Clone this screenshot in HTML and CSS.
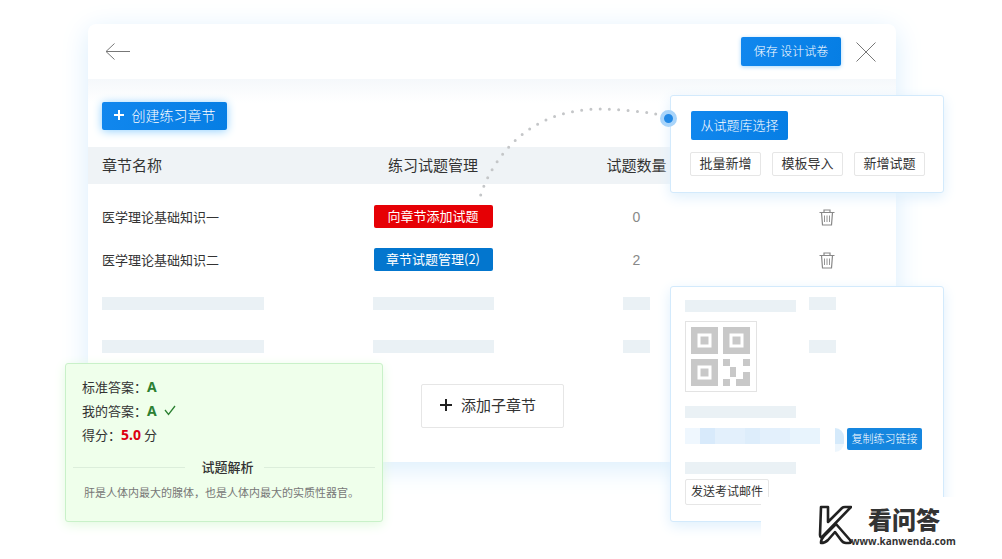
FILE: index.html
```html
<!DOCTYPE html>
<html lang="zh-CN">
<head>
<meta charset="utf-8">
<title>练习章节</title>
<link rel="stylesheet" href="styles.css">
</head>
<body>
<div class="stage">
  <main class="panel">
    <header class="panel-head">
      <button class="icon-btn" type="button" aria-label="返回">
        <svg width="26" height="18" viewBox="0 0 26 18"><path d="M9.500 .5L1 8.500l8.500 8M1 8.500h24" fill="none" stroke="#777" stroke-width="1"/></svg>
      </button>
      <div class="head-actions">
        <button class="btn primary save" type="button">保存 设计试卷</button>
        <button class="icon-btn" type="button" aria-label="关闭">
          <svg width="20" height="20" viewBox="0 0 20 20"><path d="M.5.5l19 19M19.500.5l-19 19" fill="none" stroke="#777" stroke-width="1"/></svg>
        </button>
      </div>
    </header>
    <div class="toolbar">
      <button class="btn primary create" type="button"><svg width="10" height="10" viewBox="0 0 10 10"><path d="M5 0v10M0 5h10" stroke="#fff" stroke-width="2"/></svg>创建练习章节</button>
    </div>
    <table class="chapters">
      <colgroup><col><col class="col-manage"><col class="col-count"><col class="col-del"></colgroup>
      <thead><tr><th>章节名称</th><th>练习试题管理</th><th>试题数量</th><th></th></tr></thead>
      <tbody>
        <tr><td>医学理论基础知识一</td><td><button class="btn tag red" type="button">向章节添加试题</button></td><td class="num">0</td>
          <td><button class="icon-btn" type="button" aria-label="删除"><svg width="16" height="17" viewBox="0 0 16 17"><g fill="none" stroke="#888"><path d="M.5 3.500h15M5 3.500V1h6v2.500M2.500 3.500l1 12.500h9l1-12.500" stroke-width="1.200"/><path d="M5.500 6.500v6.500M8 6.500v6.500M10.500 6.500v6.500" stroke-width=".9"/></g></svg></button></td></tr>
        <tr><td>医学理论基础知识二</td><td><button class="btn tag blue" type="button">章节试题管理(2)</button></td><td class="num">2</td>
          <td><button class="icon-btn" type="button" aria-label="删除"><svg width="16" height="17" viewBox="0 0 16 17"><g fill="none" stroke="#888"><path d="M.5 3.500h15M5 3.500V1h6v2.500M2.500 3.500l1 12.500h9l1-12.500" stroke-width="1.200"/><path d="M5.500 6.500v6.500M8 6.500v6.500M10.500 6.500v6.500" stroke-width=".9"/></g></svg></button></td></tr>
        <tr><td><span class="bar wide"></span></td><td><span class="bar mid"></span></td><td><span class="bar small"></span></td><td></td></tr>
        <tr><td><span class="bar wide"></span></td><td><span class="bar mid"></span></td><td><span class="bar small"></span></td><td></td></tr>
      </tbody>
    </table>
    <div class="panel-foot">
      <button class="btn outline add" type="button"><svg width="12" height="12" viewBox="0 0 12 12"><path d="M6 0v12M0 6h12" stroke="#222" stroke-width="2"/></svg>添加子章节</button>
    </div>
  </main>

  <svg class="connector" width="204" height="94" viewBox="476 106 204 94">
    <path d="M480.700 195C488 172 503 150 522.300 134.300C544 117 572 109 600 109C618 109 638 111 655.700 114" fill="none" stroke="#c4c6c8" stroke-width="3" stroke-linecap="round" pathLength="230" stroke-dasharray="0 10"/>
  </svg>

  <section class="card source">
    <span class="pin"></span>
    <button class="btn primary pick" type="button">从试题库选择</button>
    <div class="source-row">
      <button class="btn outline" type="button">批量新增</button>
      <button class="btn outline" type="button">模板导入</button>
      <button class="btn outline" type="button">新增试题</button>
    </div>
  </section>

  <section class="card share">
    <div class="share-top">
      <div class="share-main">
        <span class="bar line"></span>
        <div class="qr">
          <svg width="60" height="60" viewBox="0 0 60 60" role="img" aria-label="二维码">
            <g fill="#c8c8c8"><path d="M0 0h27v27H0zM32 0h27v27H32zM0 32h27v27H0z"/></g>
            <g fill="none" stroke="#fff" stroke-width="3"><path d="M8 8h11v11H8zM40 8h11v11H40zM8 40h11v11H8z"/></g>
            <path d="M32 32h7v7h-7zM52 32h7v7h-7zM39 40h6v10h-6zM32 52h7v7h-7zM52 45h7v14H45v-7h7z" fill="#c8c8c8"/>
          </svg>
        </div>
      </div>
      <div class="share-side"><span class="bar small"></span><span class="bar small"></span></div>
    </div>
    <span class="bar line"></span>
    <div class="link-row">
      <span class="mosaic"></span><span class="nub"></span>
      <button class="btn copy" type="button">复制练习链接</button>
    </div>
    <span class="bar line"></span>
    <button class="btn outline mail" type="button">发送考试邮件</button>
  </section>

  <section class="answer">
    <p>标准答案：<b>A</b></p>
    <p>我的答案：<b>A</b><svg class="tick" width="12" height="11" viewBox="0 0 12 11"><path d="M1 5l3.500 4.500L11 1" fill="none" stroke="#2c8032" stroke-width="1.300"/></svg></p>
    <p>得分：<b class="score">5.0</b> 分</p>
    <h2>试题解析</h2>
    <p class="explain">肝是人体内最大的腺体，也是人体内最大的实质性器官。</p>
  </section>

  <footer class="brand">
    <svg width="34" height="40" viewBox="0 0 34 40" aria-hidden="true"><g fill="#fff" stroke="#222" stroke-width="2.600" stroke-linejoin="round"><path d="M3 2h7v15L24 3q1-1 3-1h6L5 31q-3 3-3-1z"/><path d="M3 38q0-4 3-7L18 19l14 16q2 3-1 3h-3q-3 0-5-3l-6-8-7 8q-3 3-7 3z"/></g></svg>
    <div class="brand-text"><strong>看问答</strong><span>www.kanwenda.com</span></div>
  </footer>
</div>
</body>
</html>
```
FILE: styles.css
```css
* { box-sizing: border-box; }
body {
  margin: 0;
  background: #fff;
  color: #333;
  font: 13px/20px "Noto Sans CJK SC", "Noto Sans", sans-serif;
}
.stage { position: relative; padding: 24px 106px 97px 88px; overflow: hidden; }
button { font: inherit; color: inherit; cursor: pointer; }
.icon-btn { display: inline-flex; padding: 0; border: 0; background: none; vertical-align: middle; }
.btn {
  display: inline-flex;
  align-items: center;
  justify-content: center;
  padding: 0 0 2px;
  border: 0;
  border-radius: 2px;
  white-space: nowrap;
}
.primary { background: linear-gradient(100deg, #1187ee, #067ee4); color: #fff; font-weight: 300; }
.outline { background: #fff; border: 1px solid #e6e6e6; }

.panel { background: #fff; border-radius: 8px; box-shadow: 0 6px 28px #d9edfc; }
.panel-head { display: flex; justify-content: space-between; align-items: center; height: 55px; padding: 0 20px 0 17px; }
.head-actions { display: flex; align-items: center; gap: 15px; }
.save { width: 100px; height: 29px; font-size: 12px; box-shadow: 0 1px 4px #a9d8fb; }
.toolbar { height: 68px; padding: 23px 14px 0; background: linear-gradient(#f5f8fb, #fff 24px); }
.create { gap: 8px; width: 125px; height: 28px; font-size: 14px; box-shadow: 0 1px 10px #8fd0ff; }

.chapters { width: 100%; table-layout: fixed; border-collapse: collapse; }
.col-manage { width: 204px; }
.col-count { width: 203px; }
.col-del { width: 158px; }
.chapters th { height: 37px; padding: 0 0 2px; background: #eff3f6; font-size: 15px; font-weight: 400; }
.chapters th:first-child, .chapters td:first-child { padding-left: 14px; text-align: left; }
.chapters tbody::before { content: ""; display: block; height: 12px; }
.chapters td { height: 43px; padding: 0 0 2px; text-align: center; }
.chapters td:last-child { padding-left: 19px; }
.chapters .num { color: #888; font: 14px/20px "Liberation Sans", sans-serif; }
.tag { width: 119px; height: 23px; color: #fff; vertical-align: middle; }
.red { background: #e60005; }
.blue { background: #0376ce; }
.bar { display: block; height: 13px; background: #eaf1f5; }
.chapters .bar { display: inline-block; vertical-align: middle; }
.wide { width: 162px; }
.mid { width: 121px; }
.small { width: 27px; }
.line { width: 111px; height: 12px; }
.panel-foot { display: flex; justify-content: center; padding: 16px 0 34px; }
.add { gap: 9px; width: 143px; height: 44px; padding-right: 8px; font-size: 15px; }

.connector { position: absolute; top: 106px; right: 322px; }
.card { position: absolute; right: 58px; width: 274px; background: #fff; border: 1px solid #d3eafc; border-radius: 3px; box-shadow: 0 4px 14px #deeffc; }
.source { top: 95px; padding: 15px 18px 16px 19px; }
.pin { position: absolute; top: 14px; left: -11px; width: 17px; height: 17px; border: 4px solid #a8d4fa; border-radius: 50%; background: #2289e6; }
.pick { width: 97px; height: 29px; margin-left: 1px; }
.source-row { display: flex; justify-content: space-between; margin-top: 12px; }
.source-row .btn { width: 71px; height: 24px; }

.share { top: 286px; padding: 10px 14px 16px; }
.share-top { display: flex; gap: 13px; }
.share-main > .bar { margin-top: 3px; }
.qr { width: 72px; height: 71px; margin: 9px 0 14px; padding: 5px; border: 1px solid #e3e3e3; }
.share-side { display: grid; gap: 30px; align-content: start; }
.link-row { display: flex; height: 24px; margin: 10px 0; }
.mosaic { width: 135px; height: 16px; background: linear-gradient(90deg, #eff7fe 15px, #d8eafb 15px 30px, #e3f0fc 30px 60px, #ddedfb 60px 75px, #e3f0fc 75px 105px, #e8f4fd 105px); }
.nub { width: 9px; height: 24px; margin: 0 3px 0 15px; border-radius: 0 9px 9px 0; background: linear-gradient(#d5eafb 16px, #edf6fd 16px); }
.copy { width: 75px; height: 22px; background: #1586df; color: #fff; font-size: 11px; font-weight: 300; }
.mail { display: flex; width: 84px; height: 26px; margin-top: 5px; font-size: 12px; }

.answer { position: absolute; top: 363px; left: 65px; width: 318px; height: 159px; padding: 11px 7px 0; background: #efffeb; border: 1px solid #c9f1c9; border-radius: 3px; box-shadow: 0 3px 12px #e2fadf; }
.answer p { margin: 0; padding-left: 9px; line-height: 24px; }
.answer b { color: #2c8032; font: bold 14px/20px "Noto Sans", sans-serif; }
.answer .score { color: #dc0010; }
.tick { margin-left: 7px; }
.answer h2 { display: flex; align-items: center; margin: 10px 0 0; font-size: 13px; font-weight: 500; line-height: 20px; }
.answer h2::before, .answer h2::after { content: ""; flex: 1; height: 1px; background: #dceedb; }
.answer h2::before { margin-right: 17px; }
.answer h2::after { margin-left: 10px; }
.answer .explain { padding: 3px 0 0 11px; color: #777; font-size: 11px; }

.brand { position: absolute; right: 0; bottom: 0; display: flex; width: 241px; height: 62px; padding: 8px 0 0 57px; background: #fff; }
.brand-text { display: flex; flex-direction: column; margin-left: -1px; color: #333; }
.brand-text strong { padding-left: 17px; font-size: 24px; font-weight: 900; line-height: 28px; }
.brand-text span { margin-top: 2px; font: bold 10px/12px "Liberation Sans", "DejaVu Sans", sans-serif; font-family: "Open Sans", sans-serif; }
```
